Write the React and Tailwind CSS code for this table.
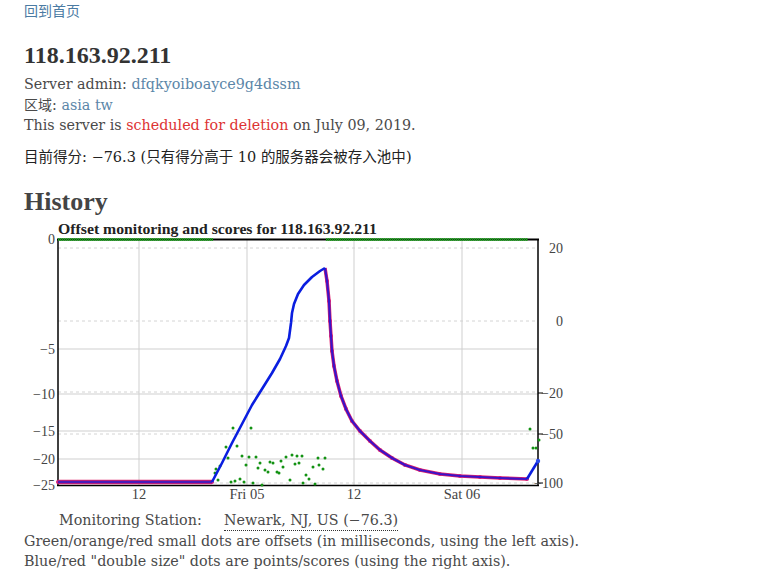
import React from "react";

const rise = [
  [212, 481], [222, 462], [232, 442], [242, 423], [252, 404], [262, 388], [272, 372],
  [280, 358], [286, 345], [289, 337], [291, 322], [292, 312], [294, 303], [298, 293],
  [304, 284], [312, 276], [320, 270], [325, 267],
];
const decay = [
  [325, 267], [327, 280], [329, 300], [330, 320], [331, 335], [332, 350], [334, 365],
  [337, 380], [341, 395], [346, 408], [352, 420], [360, 430], [370, 440], [380, 449],
  [392, 457], [405, 464], [420, 469], [440, 473], [460, 475], [480, 476], [500, 477],
  [527, 478],
];
const tail = [[527, 478], [538, 460]];
const flat = [[58, 481], [212, 481]];

const green = [
  [233, 427], [251, 427], [226, 446], [237, 445], [228, 457], [242, 455], [249, 456],
  [256, 456], [246, 464], [260, 462], [270, 461], [273, 462], [281, 460], [286, 456],
  [292, 454], [297, 455], [302, 455], [258, 467], [265, 469], [268, 471], [277, 471],
  [279, 472], [283, 466], [295, 463], [299, 462], [313, 466], [318, 457], [325, 457],
  [319, 464], [323, 468], [306, 474], [309, 478], [290, 479], [303, 482], [315, 483],
  [231, 481], [235, 480], [240, 478], [244, 481], [253, 482], [262, 484], [218, 479],
  [216, 468], [220, 465], [215, 472], [530, 428], [539, 439], [533, 447], [536, 447],
];

const pts = (a) => a.map((p) => p.join(",")).join(" ");

function Chart() {
  const leftTicks = [
    ["0", 238], ["\u22125", 348], ["\u221210", 393], ["\u221215", 430], ["\u221220", 458], ["\u221225", 484],
  ];
  const rightTicks = [
    ["20", 247], ["0", 320], ["\u221220", 392], ["\u221250", 433], ["\u2212100", 482],
  ];
  const xTicks = [["12", 139], ["Fri 05", 247], ["12", 354], ["Sat 06", 462]];
  const dotsRed = [...decay.slice(1), ...flat];
  return (
    <svg width="560" height="285" viewBox="24 218 560 285" className="block" fontFamily="Liberation Serif, serif">
      {[348, 393, 430, 458].map((y) => (
        <line key={"hs" + y} x1={58} x2={538} y1={y} y2={y} stroke="#cfcfcf" strokeWidth="1" />
      ))}
      {[247, 320, 391, 433, 482].map((y) => (
        <line key={"hd" + y} x1={58} x2={538} y1={y} y2={y} stroke="#d4d4d4" strokeWidth="1" strokeDasharray="3 3" />
      ))}
      {[139, 247, 354, 462].map((x) => (
        <line key={"v" + x} x1={x} x2={x} y1={238} y2={484} stroke="#cfcfcf" strokeWidth="1" />
      ))}
      <line x1={58} x2={58} y1={238} y2={485} stroke="#000" strokeWidth="1.5" />
      <line x1={538} x2={538} y1={238} y2={485} stroke="#000" strokeWidth="1.5" />
      <line x1={57} x2={539} y1={484.5} y2={484.5} stroke="#000" strokeWidth="1.5" />
      <line x1={57} x2={539} y1={238.5} y2={238.5} stroke="#000" strokeWidth="2" />
      {[392, 433, 482].map((y) => (
        <line key={"rt" + y} x1={538} x2={543} y1={y} y2={y} stroke="#000" strokeWidth="1" />
      ))}
      <line x1={58} x2={213} y1={238.5} y2={238.5} stroke="#1f9a1f" strokeWidth="3" strokeDasharray="1.5 0.5" />
      <line x1={326} x2={528} y1={238.5} y2={238.5} stroke="#1f9a1f" strokeWidth="3" strokeDasharray="1.5 0.5" />
      {green.map(([x, y], i) => (
        <circle key={"g" + i} cx={x} cy={y} r="1.5" fill="#139213" />
      ))}
      <polyline points={pts(flat)} fill="none" stroke="#e0206a" strokeWidth="4.5" />
      <polyline points={pts(decay)} fill="none" stroke="#e0206a" strokeWidth="3.5" />
      {dotsRed.map(([x, y], i) => (
        <circle key={"r" + i} cx={x} cy={y} r="2" fill="#d0207a" />
      ))}
      <polyline points={pts(flat)} fill="none" stroke="#4a1ab8" strokeWidth="2.5" />
      <polyline points={pts(decay)} fill="none" stroke="#3a14c8" strokeWidth="2.2" />
      <polyline points={pts(rise)} fill="none" stroke="#0a1ee0" strokeWidth="2.6" strokeLinejoin="round" />
      <polyline points={pts(tail)} fill="none" stroke="#0a1ee0" strokeWidth="2.6" />
      <circle cx={538} cy={460} r="2.2" fill="#2b4bea" />
      {leftTicks.map(([t, y]) => (
        <text key={"lt" + t} x={55} y={y + 4.5} textAnchor="end" fontSize="14" fill="#444">{t}</text>
      ))}
      {rightTicks.map(([t, y]) => (
        <text key={"rl" + t + y} x={563} y={y + 4.5} textAnchor="end" fontSize="14" fill="#444">{t}</text>
      ))}
      {xTicks.map(([t, x]) => (
        <text key={"xl" + t + x} x={x} y={498} textAnchor="middle" fontSize="14.5" fill="#444">{t}</text>
      ))}
      <text x={58} y={233} fontSize="14" fontWeight="bold" fill="#222" textLength="319" lengthAdjust="spacingAndGlyphs">
        Offset monitoring and scores for 118.163.92.211
      </text>
    </svg>
  );
}

const CJK = "[font-family:'Noto_Sans_CJK_SC',sans-serif]";

export default function App() {
  return (
    <div className="bg-white min-h-[570px] pl-6 text-[#4a4a4a] [font-family:'DejaVu_Serif','Noto_Sans_CJK_SC',serif]">
      <div className="h-5 leading-5">
        <a className="text-[14px] text-[#4b7ba3] [font-family:'Noto_Sans_CJK_SC',sans-serif]">回到首页</a>
      </div>
      <h2 className="mt-5 h-[30px] leading-[30px] text-[24px] font-bold text-[#333] [font-family:'Liberation_Serif',serif]">
        118.163.92.211
      </h2>
      <div className="mt-1 flex flex-col text-[14.3px] leading-5">
        <div>
          Server admin: <a className="text-[#5b86a8]">dfqkyoiboayce9g4dssm</a>
        </div>
        <div>
          <span className="text-[14px] [font-family:'Noto_Sans_CJK_SC',sans-serif]">区域</span>: <a className="text-[#5b86a8]">asia tw</a>
        </div>
        <div>
          This server is <span className="text-[#dd3333]">scheduled for deletion</span> on July 09, 2019.
        </div>
      </div>
      <div className="mt-[11px] h-5 leading-5 text-[14.5px] text-[#222]">
        <span className="[font-family:'Noto_Sans_CJK_SC',sans-serif]">目前得分</span>: −76.3 (
        <span className="[font-family:'Noto_Sans_CJK_SC',sans-serif]">只有得分高于</span> 10{" "}
        <span className="[font-family:'Noto_Sans_CJK_SC',sans-serif]">的服务器会被存入池中</span>)
      </div>
      <h2 className="mt-[21px] h-[30px] leading-[30px] text-[26px] font-bold text-[#444] [font-family:'Liberation_Serif',serif]">
        History
      </h2>
      <div className="mt-[2px]">
        <Chart />
      </div>
      <div className="mt-[6px] flex flex-col text-[14.3px] leading-5">
        <div className="flex pl-[35px]">
          <span className="w-[165px]">Monitoring Station:</span>
          <span className="border-b border-dotted border-[#333]">Newark, NJ, US (−76.3)</span>
        </div>
        <div>Green/orange/red small dots are offsets (in milliseconds, using the left axis).</div>
        <div>Blue/red "double size" dots are points/scores (using the right axis).</div>
      </div>
    </div>
  );
}
